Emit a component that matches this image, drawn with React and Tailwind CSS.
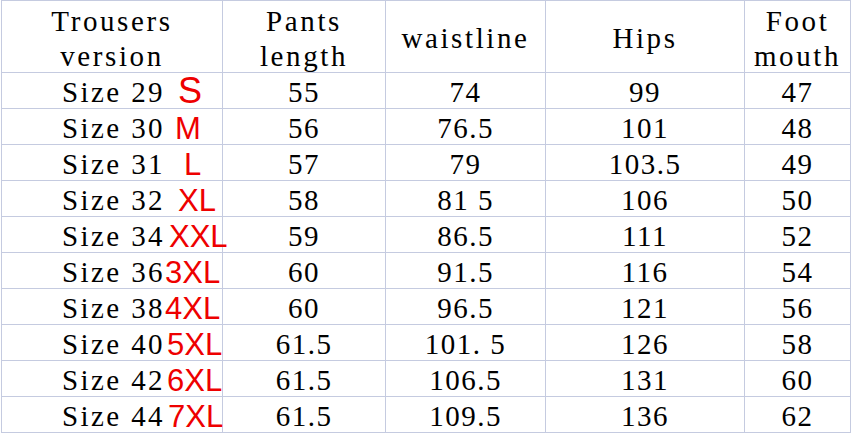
import React from 'react';

const rows = [
  { n: '29', s: 'S', big: true, ml: 'ml-[13px]', v: ['55', '74', '99', '47'] },
  { n: '30', s: 'M', ml: 'ml-[10px]', v: ['56', '76.5', '101', '48'] },
  { n: '31', s: 'L', ml: 'ml-[19px]', v: ['57', '79', '103.5', '49'] },
  { n: '32', s: 'XL', ml: 'ml-[13px]', v: ['58', '81 5', '106', '50'] },
  { n: '34', s: 'XXL', ml: 'ml-[4px]', v: ['59', '86.5', '111', '52'] },
  { n: '36', s: '3XL', ml: 'ml-0', v: ['60', '91.5', '116', '54'] },
  { n: '38', s: '4XL', ml: 'ml-0', v: ['60', '96.5', '121', '56'] },
  { n: '40', s: '5XL', ml: 'ml-[2px]', v: ['61.5', '101. 5', '126', '58'] },
  { n: '42', s: '6XL', ml: 'ml-[2px]', v: ['61.5', '106.5', '131', '60'] },
  { n: '44', s: '7XL', ml: 'ml-[3px]', v: ['61.5', '109.5', '136', '62'] },
];

const cell = 'border-r border-b border-[#c5cbe0] flex items-center justify-center';

const App = () => {
  return (
    <div className="w-[852px] h-[433px] bg-white overflow-hidden">
      <div className="ml-px grid grid-cols-[221px_163px_160px_199px_106px] border-l border-t border-[#c5cbe0] w-[850px] font-['Liberation_Serif',serif] text-[29px] text-black whitespace-pre">
        <div className={`${cell} h-[72px] flex-col leading-[35px] pt-1 tracking-[2.6px]`}>
          <span>Trousers</span>
          <span>version</span>
        </div>
        <div className={`${cell} h-[72px] flex-col leading-[35px] pt-1 tracking-[2.6px]`}>
          <span>Pants</span>
          <span>length</span>
        </div>
        <div className={`${cell} h-[72px] pt-1 tracking-[2.6px]`}>waistline</div>
        <div className={`${cell} h-[72px] pt-1 tracking-[2.6px]`}>Hips</div>
        <div className={`${cell} h-[72px] flex-col leading-[35px] pt-1 tracking-[2.6px]`}>
          <span>Foot</span>
          <span>mouth</span>
        </div>
        {rows.map((r) => (
          <React.Fragment key={r.n}>
            <div className="border-r border-b border-[#c5cbe0] h-[36px] flex items-center pl-[60px] pt-1 relative z-10">
              <span className="tracking-[2.4px]">Size {r.n}</span>
              <span
                className={`${r.ml} font-['Liberation_Sans',sans-serif] text-[#ee0000] leading-none ${r.big ? 'text-[36px] -mt-1' : 'text-[31px]'}`}
              >
                {r.s}
              </span>
            </div>
            {r.v.map((v, i) => (
              <div key={i} className={`${cell} h-[36px] pt-1 tracking-[1.5px]`}>
                {v}
              </div>
            ))}
          </React.Fragment>
        ))}
      </div>
    </div>
  );
};

export default App;
